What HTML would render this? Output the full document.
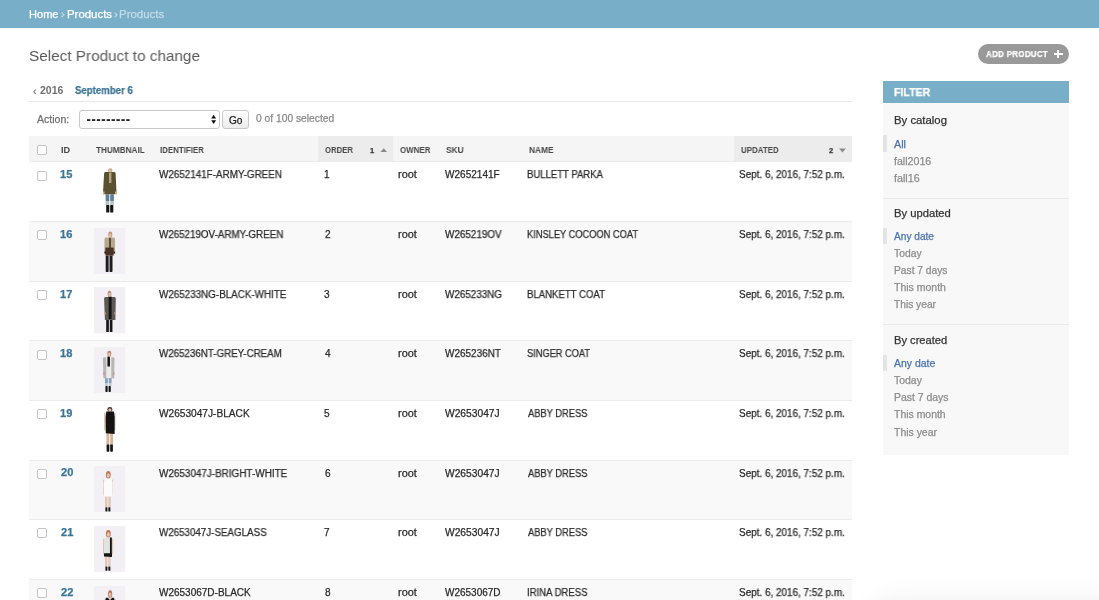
<!DOCTYPE html>
<html><head><meta charset="utf-8"><title>Select Product to change</title>
<style>
html,body{margin:0;padding:0;}
body{width:1099px;height:600px;overflow:hidden;position:relative;background:#fff;font-family:"Liberation Sans", sans-serif;}
.t{position:absolute;white-space:nowrap;transform-origin:0 0;will-change:transform;-webkit-text-stroke:0.25px currentColor;}
.a{position:absolute;}
</style></head><body>
<div class="a" style="left:0;top:0;width:1099px;height:28px;background:#79aec8;"></div>
<div class="a" style="left:977.5px;top:44.2px;width:91px;height:19.6px;border-radius:10px;background:#999;"></div>
<div class="a" style="left:1054px;top:53.1px;width:8.5px;height:2.4px;background:#fff;"></div>
<div class="a" style="left:1057.05px;top:50.1px;width:2.4px;height:8.4px;background:#fff;"></div>
<div class="a" style="left:29.4px;top:100.5px;width:822.4px;height:1.5px;background:#e6e6e6;"></div>
<div class="a" style="left:79.3px;top:110.2px;width:138.6px;height:17.3px;border:1px solid #c9c9c9;border-radius:3px;background:#fff;"></div>
<div class="a" style="left:86.7px;top:118.9px;width:50px;height:4px;"><svg width="50" height="4" style="display:block"><rect x="0.00" y="0.2" width="3.35" height="1.75" fill="#1a1a1a"/><rect x="4.91" y="0.2" width="3.35" height="1.75" fill="#1a1a1a"/><rect x="9.82" y="0.2" width="3.35" height="1.75" fill="#1a1a1a"/><rect x="14.73" y="0.2" width="3.35" height="1.75" fill="#1a1a1a"/><rect x="19.64" y="0.2" width="3.35" height="1.75" fill="#1a1a1a"/><rect x="24.55" y="0.2" width="3.35" height="1.75" fill="#1a1a1a"/><rect x="29.46" y="0.2" width="3.35" height="1.75" fill="#1a1a1a"/><rect x="34.37" y="0.2" width="3.35" height="1.75" fill="#1a1a1a"/><rect x="39.28" y="0.2" width="3.35" height="1.75" fill="#1a1a1a"/></svg></div>
<div class="a" style="left:210px;top:113px;width:8px;height:13px;"><svg width="8" height="13" style="display:block"><polygon points="1.2,5.4 6.1,5.4 3.65,1.8" fill="#111"/><polygon points="1.2,7.3 6.1,7.3 3.65,11.1" fill="#111"/></svg></div>
<div class="a" style="left:222.4px;top:110.2px;width:25px;height:16.5px;border:1px solid #c8c8c8;border-radius:3px;background:linear-gradient(#fefefe,#ececec);"></div>
<div class="a" style="left:29.4px;top:136.2px;width:822.4px;height:25.4px;background:#f5f5f5;"></div>
<div class="a" style="left:318.2px;top:136.2px;width:74.5px;height:25.4px;background:#ececec;"></div>
<div class="a" style="left:734px;top:136.2px;width:117.8px;height:25.4px;background:#ececec;"></div>
<div class="a" style="left:378px;top:146px;width:12px;height:8px;"><svg width="12" height="8" style="display:block"><polygon points="2.4,6 9.1,6 5.75,2.2" fill="#8a8a8a"/></svg></div>
<div class="a" style="left:837px;top:146px;width:12px;height:8px;"><svg width="12" height="8" style="display:block"><polygon points="2,2.6 8.9,2.6 5.45,6.4" fill="#8a8a8a"/></svg></div>
<div class="a" style="left:37px;top:144.6px;width:8px;height:8px;border:1px solid #c4c4c4;border-radius:2px;background:#fff;"></div>
<div class="a" style="left:29.4px;top:161.75px;width:822.4px;height:59.65px;background:#fff;"></div>
<div class="a" style="left:29.4px;top:161.25px;width:822.4px;height:1px;background:#ececec;"></div>
<div class="a" style="left:37px;top:170.55px;width:8px;height:8px;border:1px solid #c4c4c4;border-radius:2px;background:#fff;"></div>
<div class="a" style="left:94.3px;top:167.95px;width:31.3px;height:46.3px;"><svg width="31.3" height="46.3" viewBox="0 0 31.3 46.3" style="display:block"><rect x="0" y="0" width="31.3" height="46.3" fill="#ffffff"/><g style="filter:blur(0.25px)"><rect x="11.6" y="26.2" width="3.70" height="6.80" rx="0.6" fill="#5f7f9c"/><rect x="16.20" y="26.2" width="3.70" height="6.80" rx="0.6" fill="#5f7f9c"/><rect x="11.6" y="32.9" width="3.70" height="4.30" rx="0.6" fill="#b9c2c4"/><rect x="16.20" y="32.9" width="3.70" height="4.30" rx="0.6" fill="#b9c2c4"/><rect x="12.2" y="37.0" width="3.10" height="7.60" rx="0.6" fill="#141414"/><rect x="16.20" y="37.0" width="3.10" height="7.60" rx="0.6" fill="#141414"/><path d="M11.299999999999999 4.1 L20.400000000000002 4.1 Q21.6 4.1 21.6 5.6 L22.6 26.3 L8.9 26.3 L10.1 5.6 Q10.1 4.1 11.299999999999999 4.1 Z" fill="#59512f"/><rect x="15.0" y="5" width="2.4" height="10" fill="#b9a283"/><rect x="8.9" y="23.5" width="1.6" height="2.6" fill="#d8b090"/><rect x="21" y="23.5" width="1.6" height="2.6" fill="#d8b090"/><ellipse cx="16.20" cy="2.40" rx="2.21" ry="2.20" fill="#c9a27a"/><ellipse cx="16.20" cy="2.84" rx="1.33" ry="1.32" fill="#e6c4b0"/></g></svg></div>
<div class="a" style="left:29.4px;top:221.40px;width:822.4px;height:59.65px;background:#f9f9f9;"></div>
<div class="a" style="left:29.4px;top:220.90px;width:822.4px;height:1px;background:#ececec;"></div>
<div class="a" style="left:37px;top:230.2px;width:8px;height:8px;border:1px solid #c4c4c4;border-radius:2px;background:#fff;"></div>
<div class="a" style="left:94.3px;top:227.60px;width:31.3px;height:46.3px;"><svg width="31.3" height="46.3" viewBox="0 0 31.3 46.3" style="display:block"><rect x="0" y="0" width="31.3" height="46.3" fill="#f2f0f4"/><g style="filter:blur(0.25px)"><rect x="11.7" y="27.4" width="2.95" height="16.50" rx="0.6" fill="#1c1c1c"/><rect x="15.55" y="27.4" width="2.95" height="16.50" rx="0.6" fill="#1c1c1c"/><path d="M11.7 9.6 L19.8 9.6 Q21.0 9.6 21.0 11.1 L21.1 24.6 L10.4 24.6 L10.5 11.1 Q10.5 9.6 11.7 9.6 Z" fill="#b3ab8c"/><rect x="11.4" y="19.6" width="8.3" height="8.0" fill="#4a3223"/><rect x="15.2" y="10" width="1.6" height="10" fill="#4a3223"/><rect x="10.4" y="23.6" width="1.6" height="2" fill="#1a1a1a"/><rect x="19.5" y="23.6" width="1.6" height="2" fill="#1a1a1a"/><ellipse cx="16.25" cy="6.75" rx="2.00" ry="3.15" fill="#c79272"/><ellipse cx="16.25" cy="7.38" rx="1.20" ry="1.89" fill="#e6c4b0"/></g></svg></div>
<div class="a" style="left:29.4px;top:281.05px;width:822.4px;height:59.65px;background:#fff;"></div>
<div class="a" style="left:29.4px;top:280.55px;width:822.4px;height:1px;background:#ececec;"></div>
<div class="a" style="left:37px;top:289.85px;width:8px;height:8px;border:1px solid #c4c4c4;border-radius:2px;background:#fff;"></div>
<div class="a" style="left:94.3px;top:287.25px;width:31.3px;height:46.3px;"><svg width="31.3" height="46.3" viewBox="0 0 31.3 46.3" style="display:block"><rect x="0" y="0" width="31.3" height="46.3" fill="#f2f0f4"/><g style="filter:blur(0.25px)"><rect x="12.2" y="31.5" width="2.67" height="13.50" rx="0.6" fill="#161616"/><rect x="15.78" y="31.5" width="2.67" height="13.50" rx="0.6" fill="#161616"/><path d="M11.299999999999999 10.0 L20.6 10.0 Q21.8 10.0 21.8 11.5 L21.4 32.9 L10.9 32.9 L10.1 11.5 Q10.1 10.0 11.299999999999999 10.0 Z" fill="#5d5954"/><rect x="14.7" y="9.6" width="2.9" height="22.4" fill="#141414"/><rect x="10.3" y="25.3" width="1.5" height="2" fill="#d0a090"/><rect x="20.3" y="25.3" width="1.5" height="2" fill="#d0a090"/><ellipse cx="15.50" cy="6.90" rx="1.79" ry="3.20" fill="#b8896a"/><ellipse cx="15.50" cy="7.54" rx="1.07" ry="1.92" fill="#e6c4b0"/></g></svg></div>
<div class="a" style="left:29.4px;top:340.70px;width:822.4px;height:59.65px;background:#f9f9f9;"></div>
<div class="a" style="left:29.4px;top:340.20px;width:822.4px;height:1px;background:#ececec;"></div>
<div class="a" style="left:37px;top:349.5px;width:8px;height:8px;border:1px solid #c4c4c4;border-radius:2px;background:#fff;"></div>
<div class="a" style="left:94.3px;top:346.90px;width:31.3px;height:46.3px;"><svg width="31.3" height="46.3" viewBox="0 0 31.3 46.3" style="display:block"><rect x="0" y="0" width="31.3" height="46.3" fill="#f2f0f4"/><g style="filter:blur(0.25px)"><rect x="11.0" y="31.0" width="2.85" height="5.60" rx="0.6" fill="#86a3be"/><rect x="14.75" y="31.0" width="2.85" height="5.60" rx="0.6" fill="#86a3be"/><rect x="11.0" y="36.5" width="2.85" height="2.80" rx="0.6" fill="#c4ccd2"/><rect x="14.75" y="36.5" width="2.85" height="2.80" rx="0.6" fill="#c4ccd2"/><rect x="11.4" y="39.1" width="2.25" height="5.80" rx="0.6" fill="#151515"/><rect x="14.55" y="39.1" width="2.25" height="5.80" rx="0.6" fill="#151515"/><path d="M10.1 10.3 L19.3 10.3 Q20.5 10.3 20.5 11.8 L20.2 31.2 L9.4 31.2 L8.9 11.8 Q8.9 10.3 10.1 10.3 Z" fill="#b6b6b4"/><rect x="12.3" y="10" width="5" height="21" fill="#ecebea"/><rect x="13.45" y="9.5" width="2.5" height="10" fill="#141414"/><rect x="9.2" y="25.5" width="1.5" height="2" fill="#d09080"/><rect x="19" y="25.5" width="1.5" height="2" fill="#d09080"/><ellipse cx="15.30" cy="6.80" rx="1.96" ry="3.10" fill="#c08062"/><ellipse cx="15.30" cy="7.42" rx="1.17" ry="1.86" fill="#e6c4b0"/></g></svg></div>
<div class="a" style="left:29.4px;top:400.35px;width:822.4px;height:59.65px;background:#fff;"></div>
<div class="a" style="left:29.4px;top:399.85px;width:822.4px;height:1px;background:#ececec;"></div>
<div class="a" style="left:37px;top:409.15px;width:8px;height:8px;border:1px solid #c4c4c4;border-radius:2px;background:#fff;"></div>
<div class="a" style="left:94.3px;top:406.55px;width:31.3px;height:46.3px;"><svg width="31.3" height="46.3" viewBox="0 0 31.3 46.3" style="display:block"><rect x="0" y="0" width="31.3" height="46.3" fill="#ffffff"/><g style="filter:blur(0.25px)"><rect x="10.1" y="5.5" width="1.5" height="18.0" rx="0.7" fill="#dcc0aa"/><rect x="19.9" y="5.5" width="1.5" height="18.0" rx="0.7" fill="#dcc0aa"/><rect x="12.4" y="26.0" width="2.90" height="12.00" rx="0.6" fill="#d8b498"/><rect x="16.20" y="26.0" width="2.90" height="12.00" rx="0.6" fill="#d8b498"/><rect x="12.6" y="37.6" width="2.70" height="7.10" rx="0.6" fill="#141414"/><rect x="16.20" y="37.6" width="2.70" height="7.10" rx="0.6" fill="#141414"/><path d="M12.3 4.6 L19.9 4.6 L20.6 10 L20.6 27 L11.8 26.2 L11.6 10 Z" fill="#131313"/><ellipse cx="15.90" cy="2.45" rx="2.55" ry="2.35" fill="#4a3026"/><ellipse cx="15.90" cy="2.92" rx="1.53" ry="1.41" fill="#e6c4b0"/></g></svg></div>
<div class="a" style="left:29.4px;top:460.00px;width:822.4px;height:59.65px;background:#f9f9f9;"></div>
<div class="a" style="left:29.4px;top:459.50px;width:822.4px;height:1px;background:#ececec;"></div>
<div class="a" style="left:37px;top:468.8px;width:8px;height:8px;border:1px solid #c4c4c4;border-radius:2px;background:#fff;"></div>
<div class="a" style="left:94.3px;top:466.20px;width:31.3px;height:46.3px;"><svg width="31.3" height="46.3" viewBox="0 0 31.3 46.3" style="display:block"><rect x="0" y="0" width="31.3" height="46.3" fill="#f2f0f4"/><g style="filter:blur(0.25px)"><rect x="9.2" y="13.5" width="1.5" height="16.0" rx="0.7" fill="#e2c2b2"/><rect x="17.5" y="13.5" width="1.5" height="16.0" rx="0.7" fill="#e2c2b2"/><rect x="11.0" y="30.0" width="2.45" height="11.40" rx="0.6" fill="#e4c6b6"/><rect x="14.35" y="30.0" width="2.45" height="11.40" rx="0.6" fill="#e4c6b6"/><rect x="11.4" y="41.2" width="2.05" height="4.30" rx="0.6" fill="#1b1b1b"/><rect x="14.35" y="41.2" width="2.05" height="4.30" rx="0.6" fill="#1b1b1b"/><path d="M11 12.5 L17.4 12.5 L18.6 16 L18.6 30.6 L9.8 30.6 L9.8 16 Z" fill="#fbfbfb"/><ellipse cx="14.30" cy="8.75" rx="2.38" ry="3.85" fill="#bb7452"/><ellipse cx="14.30" cy="9.52" rx="1.43" ry="2.31" fill="#e6c4b0"/></g></svg></div>
<div class="a" style="left:29.4px;top:519.65px;width:822.4px;height:59.65px;background:#fff;"></div>
<div class="a" style="left:29.4px;top:519.15px;width:822.4px;height:1px;background:#ececec;"></div>
<div class="a" style="left:37px;top:528.45px;width:8px;height:8px;border:1px solid #c4c4c4;border-radius:2px;background:#fff;"></div>
<div class="a" style="left:94.3px;top:525.85px;width:31.3px;height:46.3px;"><svg width="31.3" height="46.3" viewBox="0 0 31.3 46.3" style="display:block"><rect x="0" y="0" width="31.3" height="46.3" fill="#f2f0f4"/><g style="filter:blur(0.25px)"><rect x="9.0" y="12.5" width="1.5" height="16.0" rx="0.7" fill="#e2c2b2"/><rect x="17.7" y="12.5" width="1.5" height="16.0" rx="0.7" fill="#e2c2b2"/><rect x="11.0" y="30.8" width="2.35" height="9.90" rx="0.6" fill="#e4c6b6"/><rect x="14.25" y="30.8" width="2.35" height="9.90" rx="0.6" fill="#e4c6b6"/><rect x="11.4" y="40.5" width="2.05" height="4.30" rx="0.6" fill="#1b1b1b"/><rect x="14.35" y="40.5" width="2.05" height="4.30" rx="0.6" fill="#1b1b1b"/><path d="M10.6 11.5 L17.6 11.5 L17.8 31 L10.0 30.6 L10.0 27 L10.2 15 Z" fill="#e2e2e2"/><rect x="15.95" y="11.5" width="1.9" height="19.5" fill="#151515"/><path d="M10.0 27.3 L17.8 27.3 L17.8 31 L10.0 30.4 Z" fill="#151515"/><ellipse cx="14.35" cy="7.75" rx="2.42" ry="3.75" fill="#bb7452"/><ellipse cx="14.35" cy="8.50" rx="1.45" ry="2.25" fill="#e6c4b0"/></g></svg></div>
<div class="a" style="left:29.4px;top:579.30px;width:822.4px;height:59.65px;background:#f9f9f9;"></div>
<div class="a" style="left:29.4px;top:578.80px;width:822.4px;height:1px;background:#ececec;"></div>
<div class="a" style="left:37px;top:588.1px;width:8px;height:8px;border:1px solid #c4c4c4;border-radius:2px;background:#fff;"></div>
<div class="a" style="left:94.3px;top:585.50px;width:31.3px;height:46.3px;"><svg width="31.3" height="46.3" viewBox="0 0 31.3 46.3" style="display:block"><rect x="0" y="0" width="31.3" height="46.3" fill="#f2f0f4"/><g style="filter:blur(0.25px)"><rect x="10.6" y="12.5" width="1.6" height="16.0" rx="0.7" fill="#e2c2b2"/><rect x="20.0" y="12.5" width="1.6" height="16.0" rx="0.7" fill="#e2c2b2"/><path d="M12.0 11.8 L19.9 11.8 L21 16 L21 34 L11 34 L11 16 Z" fill="#151515"/><path d="M13.6 11.6 L18.4 11.6 L16 14.2 Z" fill="#eadbd4"/><ellipse cx="16.15" cy="7.95" rx="2.08" ry="3.65" fill="#bb7452"/><ellipse cx="16.15" cy="8.68" rx="1.25" ry="2.19" fill="#e6c4b0"/></g></svg></div>
<div class="a" style="left:883px;top:80.5px;width:186px;height:374px;background:#f8f8f8;"></div>
<div class="a" style="left:883px;top:80.5px;width:186px;height:22.3px;background:#79aec8;"></div>
<div class="a" style="left:883px;top:197.5px;width:186px;height:1px;background:#eaeaea;"></div>
<div class="a" style="left:883px;top:324px;width:186px;height:1px;background:#eaeaea;"></div>
<div class="a" style="left:883px;top:135px;width:3.6px;height:16.6px;background:#e4e4e4;"></div>
<div class="a" style="left:883px;top:227.6px;width:3.6px;height:16.4px;background:#e4e4e4;"></div>
<div class="a" style="left:883px;top:354.5px;width:3.6px;height:16.3px;background:#e4e4e4;"></div>
<div class="a" style="left:876px;top:603px;width:300px;height:100px;border-radius:16px;box-shadow:0 0 24px 6px rgba(0,0,0,0.055);background:#fff;"></div>
<div class="t" style="left:28.70px;top:8.95px;font-size:11.0px;line-height:11.0px;color:#fff;font-weight:400;transform:scaleX(1.0062);">Home</div>
<div class="t" style="left:60.87px;top:8.95px;font-size:11.0px;line-height:11.0px;color:#c4dce8;font-weight:400;transform:scaleX(1.0288);">›</div>
<div class="t" style="left:66.67px;top:8.95px;font-size:11.0px;line-height:11.0px;color:#fff;font-weight:400;transform:scaleX(1.0377);">Products</div>
<div class="t" style="left:113.57px;top:8.95px;font-size:11.0px;line-height:11.0px;color:#c4dce8;font-weight:400;transform:scaleX(1.0288);">›</div>
<div class="t" style="left:118.96px;top:8.95px;font-size:11.0px;line-height:11.0px;color:#c4dce8;font-weight:400;transform:scaleX(1.0425);">Products</div>
<div class="t" style="left:28.52px;top:47.76px;font-size:15.4px;line-height:15.4px;color:#5a5a5a;font-weight:400;transform:scaleX(0.9944);-webkit-text-stroke:0;">Select Product to change</div>
<div class="t" style="left:33.32px;top:85.67px;font-size:10.5px;line-height:10.5px;color:#777;font-weight:400;">‹</div>
<div class="t" style="left:39.60px;top:85.46px;font-size:10.5px;line-height:10.5px;color:#707070;font-weight:700;transform:scaleX(0.9835);-webkit-text-stroke:0;">2016</div>
<div class="t" style="left:74.54px;top:85.46px;font-size:10.5px;line-height:10.5px;color:#3a7396;font-weight:700;transform:scaleX(0.9162);">September 6</div>
<div class="t" style="left:36.83px;top:115.32px;font-size:10.0px;line-height:10.0px;color:#707070;font-weight:400;transform:scaleX(1.0560);">Action:</div>
<div class="t" style="left:229.32px;top:115.62px;font-size:10.0px;line-height:10.0px;color:#222;font-weight:400;transform:scaleX(1.0074);">Go</div>
<div class="t" style="left:256.48px;top:114.42px;font-size:10.0px;line-height:10.0px;color:#8a8a8a;font-weight:400;transform:scaleX(1.0272);">0 of 100 selected</div>
<div class="t" style="left:61.06px;top:145.96px;font-size:9.0px;line-height:9.0px;color:#484848;font-weight:700;transform:scaleX(1.0120);-webkit-text-stroke:0;">ID</div>
<div class="t" style="left:95.82px;top:145.96px;font-size:9.0px;line-height:9.0px;color:#484848;font-weight:700;transform:scaleX(0.9111);-webkit-text-stroke:0;">THUMBNAIL</div>
<div class="t" style="left:160.15px;top:145.96px;font-size:9.0px;line-height:9.0px;color:#484848;font-weight:700;transform:scaleX(0.8775);-webkit-text-stroke:0;">IDENTIFIER</div>
<div class="t" style="left:325.07px;top:145.96px;font-size:9.0px;line-height:9.0px;color:#484848;font-weight:700;transform:scaleX(0.8601);-webkit-text-stroke:0;">ORDER</div>
<div class="t" style="left:400.06px;top:145.96px;font-size:9.0px;line-height:9.0px;color:#484848;font-weight:700;transform:scaleX(0.8834);-webkit-text-stroke:0;">OWNER</div>
<div class="t" style="left:445.64px;top:145.96px;font-size:9.0px;line-height:9.0px;color:#484848;font-weight:700;transform:scaleX(0.9259);-webkit-text-stroke:0;">SKU</div>
<div class="t" style="left:528.91px;top:145.96px;font-size:9.0px;line-height:9.0px;color:#484848;font-weight:700;transform:scaleX(0.9271);-webkit-text-stroke:0;">NAME</div>
<div class="t" style="left:741.19px;top:145.96px;font-size:9.0px;line-height:9.0px;color:#484848;font-weight:700;transform:scaleX(0.8818);-webkit-text-stroke:0;">UPDATED</div>
<div class="t" style="left:369.80px;top:147.11px;font-size:7.8px;line-height:7.8px;color:#333;font-weight:700;transform:scaleX(0.9500);">1</div>
<div class="t" style="left:828.56px;top:147.11px;font-size:7.8px;line-height:7.8px;color:#333;font-weight:700;transform:scaleX(0.9500);">2</div>
<div class="t" style="left:59.98px;top:170.24px;font-size:10.0px;line-height:10.0px;color:#3b7698;font-weight:700;transform:scaleX(1.1074);">15</div>
<div class="t" style="left:158.67px;top:170.47px;font-size:10.0px;line-height:10.0px;color:#2b2b2b;font-weight:400;transform:scaleX(0.9861);">W2652141F-ARMY-GREEN</div>
<div class="t" style="left:323.83px;top:170.47px;font-size:10.0px;line-height:10.0px;color:#2b2b2b;font-weight:400;transform:scaleX(1.0059);">1</div>
<div class="t" style="left:398.44px;top:170.47px;font-size:10.0px;line-height:10.0px;color:#2b2b2b;font-weight:400;transform:scaleX(1.0900);">root</div>
<div class="t" style="left:444.87px;top:170.47px;font-size:10.0px;line-height:10.0px;color:#2b2b2b;font-weight:400;transform:scaleX(1.0036);">W2652141F</div>
<div class="t" style="left:526.99px;top:170.47px;font-size:10.0px;line-height:10.0px;color:#2b2b2b;font-weight:400;transform:scaleX(0.9532);">BULLETT PARKA</div>
<div class="t" style="left:739.36px;top:170.47px;font-size:10.0px;line-height:10.0px;color:#2b2b2b;font-weight:400;transform:scaleX(0.9917);">Sept. 6, 2016, 7:52 p.m.</div>
<div class="t" style="left:59.98px;top:229.89px;font-size:10.0px;line-height:10.0px;color:#3b7698;font-weight:700;transform:scaleX(1.1074);">16</div>
<div class="t" style="left:158.67px;top:230.12px;font-size:10.0px;line-height:10.0px;color:#2b2b2b;font-weight:400;transform:scaleX(0.9796);">W265219OV-ARMY-GREEN</div>
<div class="t" style="left:324.52px;top:230.12px;font-size:10.0px;line-height:10.0px;color:#2b2b2b;font-weight:400;transform:scaleX(1.0059);">2</div>
<div class="t" style="left:398.44px;top:230.12px;font-size:10.0px;line-height:10.0px;color:#2b2b2b;font-weight:400;transform:scaleX(1.0900);">root</div>
<div class="t" style="left:444.87px;top:230.12px;font-size:10.0px;line-height:10.0px;color:#2b2b2b;font-weight:400;transform:scaleX(0.9898);">W265219OV</div>
<div class="t" style="left:526.98px;top:230.12px;font-size:10.0px;line-height:10.0px;color:#2b2b2b;font-weight:400;transform:scaleX(0.9288);">KINSLEY COCOON COAT</div>
<div class="t" style="left:739.36px;top:230.12px;font-size:10.0px;line-height:10.0px;color:#2b2b2b;font-weight:400;transform:scaleX(0.9917);">Sept. 6, 2016, 7:52 p.m.</div>
<div class="t" style="left:59.98px;top:289.54px;font-size:10.0px;line-height:10.0px;color:#3b7698;font-weight:700;transform:scaleX(1.1074);">17</div>
<div class="t" style="left:158.67px;top:289.77px;font-size:10.0px;line-height:10.0px;color:#2b2b2b;font-weight:400;transform:scaleX(0.9839);">W265233NG-BLACK-WHITE</div>
<div class="t" style="left:324.48px;top:289.77px;font-size:10.0px;line-height:10.0px;color:#2b2b2b;font-weight:400;transform:scaleX(1.0059);">3</div>
<div class="t" style="left:398.44px;top:289.77px;font-size:10.0px;line-height:10.0px;color:#2b2b2b;font-weight:400;transform:scaleX(1.0900);">root</div>
<div class="t" style="left:444.87px;top:289.77px;font-size:10.0px;line-height:10.0px;color:#2b2b2b;font-weight:400;transform:scaleX(0.9859);">W265233NG</div>
<div class="t" style="left:526.99px;top:289.77px;font-size:10.0px;line-height:10.0px;color:#2b2b2b;font-weight:400;transform:scaleX(0.9589);">BLANKETT COAT</div>
<div class="t" style="left:739.36px;top:289.77px;font-size:10.0px;line-height:10.0px;color:#2b2b2b;font-weight:400;transform:scaleX(0.9917);">Sept. 6, 2016, 7:52 p.m.</div>
<div class="t" style="left:59.98px;top:349.19px;font-size:10.0px;line-height:10.0px;color:#3b7698;font-weight:700;transform:scaleX(1.1074);">18</div>
<div class="t" style="left:158.67px;top:349.42px;font-size:10.0px;line-height:10.0px;color:#2b2b2b;font-weight:400;transform:scaleX(0.9763);">W265236NT-GREY-CREAM</div>
<div class="t" style="left:324.78px;top:349.42px;font-size:10.0px;line-height:10.0px;color:#2b2b2b;font-weight:400;transform:scaleX(1.0059);">4</div>
<div class="t" style="left:398.44px;top:349.42px;font-size:10.0px;line-height:10.0px;color:#2b2b2b;font-weight:400;transform:scaleX(1.0900);">root</div>
<div class="t" style="left:444.87px;top:349.42px;font-size:10.0px;line-height:10.0px;color:#2b2b2b;font-weight:400;transform:scaleX(0.9963);">W265236NT</div>
<div class="t" style="left:526.84px;top:349.42px;font-size:10.0px;line-height:10.0px;color:#2b2b2b;font-weight:400;transform:scaleX(0.9264);">SINGER COAT</div>
<div class="t" style="left:739.36px;top:349.42px;font-size:10.0px;line-height:10.0px;color:#2b2b2b;font-weight:400;transform:scaleX(0.9917);">Sept. 6, 2016, 7:52 p.m.</div>
<div class="t" style="left:59.98px;top:408.84px;font-size:10.0px;line-height:10.0px;color:#3b7698;font-weight:700;transform:scaleX(1.1074);">19</div>
<div class="t" style="left:158.66px;top:409.07px;font-size:10.0px;line-height:10.0px;color:#2b2b2b;font-weight:400;transform:scaleX(1.0132);">W2653047J-BLACK</div>
<div class="t" style="left:324.46px;top:409.07px;font-size:10.0px;line-height:10.0px;color:#2b2b2b;font-weight:400;transform:scaleX(1.0059);">5</div>
<div class="t" style="left:398.44px;top:409.07px;font-size:10.0px;line-height:10.0px;color:#2b2b2b;font-weight:400;transform:scaleX(1.0900);">root</div>
<div class="t" style="left:444.86px;top:409.07px;font-size:10.0px;line-height:10.0px;color:#2b2b2b;font-weight:400;transform:scaleX(1.0240);">W2653047J</div>
<div class="t" style="left:527.67px;top:409.07px;font-size:10.0px;line-height:10.0px;color:#2b2b2b;font-weight:400;transform:scaleX(0.9323);">ABBY DRESS</div>
<div class="t" style="left:739.36px;top:409.07px;font-size:10.0px;line-height:10.0px;color:#2b2b2b;font-weight:400;transform:scaleX(0.9917);">Sept. 6, 2016, 7:52 p.m.</div>
<div class="t" style="left:60.67px;top:468.49px;font-size:10.0px;line-height:10.0px;color:#3b7698;font-weight:700;transform:scaleX(1.1074);">20</div>
<div class="t" style="left:158.67px;top:468.72px;font-size:10.0px;line-height:10.0px;color:#2b2b2b;font-weight:400;transform:scaleX(0.9901);">W2653047J-BRIGHT-WHITE</div>
<div class="t" style="left:324.52px;top:468.72px;font-size:10.0px;line-height:10.0px;color:#2b2b2b;font-weight:400;transform:scaleX(1.0059);">6</div>
<div class="t" style="left:398.44px;top:468.72px;font-size:10.0px;line-height:10.0px;color:#2b2b2b;font-weight:400;transform:scaleX(1.0900);">root</div>
<div class="t" style="left:444.86px;top:468.72px;font-size:10.0px;line-height:10.0px;color:#2b2b2b;font-weight:400;transform:scaleX(1.0240);">W2653047J</div>
<div class="t" style="left:527.67px;top:468.72px;font-size:10.0px;line-height:10.0px;color:#2b2b2b;font-weight:400;transform:scaleX(0.9323);">ABBY DRESS</div>
<div class="t" style="left:739.36px;top:468.72px;font-size:10.0px;line-height:10.0px;color:#2b2b2b;font-weight:400;transform:scaleX(0.9917);">Sept. 6, 2016, 7:52 p.m.</div>
<div class="t" style="left:60.67px;top:528.14px;font-size:10.0px;line-height:10.0px;color:#3b7698;font-weight:700;transform:scaleX(1.1074);">21</div>
<div class="t" style="left:158.67px;top:528.37px;font-size:10.0px;line-height:10.0px;color:#2b2b2b;font-weight:400;transform:scaleX(0.9776);">W2653047J-SEAGLASS</div>
<div class="t" style="left:323.87px;top:528.37px;font-size:10.0px;line-height:10.0px;color:#2b2b2b;font-weight:400;transform:scaleX(1.0059);">7</div>
<div class="t" style="left:398.44px;top:528.37px;font-size:10.0px;line-height:10.0px;color:#2b2b2b;font-weight:400;transform:scaleX(1.0900);">root</div>
<div class="t" style="left:444.86px;top:528.37px;font-size:10.0px;line-height:10.0px;color:#2b2b2b;font-weight:400;transform:scaleX(1.0240);">W2653047J</div>
<div class="t" style="left:527.67px;top:528.37px;font-size:10.0px;line-height:10.0px;color:#2b2b2b;font-weight:400;transform:scaleX(0.9323);">ABBY DRESS</div>
<div class="t" style="left:739.36px;top:528.37px;font-size:10.0px;line-height:10.0px;color:#2b2b2b;font-weight:400;transform:scaleX(0.9917);">Sept. 6, 2016, 7:52 p.m.</div>
<div class="t" style="left:60.67px;top:587.79px;font-size:10.0px;line-height:10.0px;color:#3b7698;font-weight:700;transform:scaleX(1.1074);">22</div>
<div class="t" style="left:158.67px;top:588.02px;font-size:10.0px;line-height:10.0px;color:#2b2b2b;font-weight:400;">W2653067D-BLACK</div>
<div class="t" style="left:324.56px;top:588.02px;font-size:10.0px;line-height:10.0px;color:#2b2b2b;font-weight:400;transform:scaleX(1.0059);">8</div>
<div class="t" style="left:398.44px;top:588.02px;font-size:10.0px;line-height:10.0px;color:#2b2b2b;font-weight:400;transform:scaleX(1.0900);">root</div>
<div class="t" style="left:444.87px;top:588.02px;font-size:10.0px;line-height:10.0px;color:#2b2b2b;font-weight:400;">W2653067D</div>
<div class="t" style="left:526.77px;top:588.02px;font-size:10.0px;line-height:10.0px;color:#2b2b2b;font-weight:400;transform:scaleX(0.9551);">IRINA DRESS</div>
<div class="t" style="left:739.36px;top:588.02px;font-size:10.0px;line-height:10.0px;color:#2b2b2b;font-weight:400;transform:scaleX(0.9917);">Sept. 6, 2016, 7:52 p.m.</div>
<div class="t" style="left:893.50px;top:87.24px;font-size:10.8px;line-height:10.8px;color:#fff;font-weight:700;transform:scaleX(0.9762);">FILTER</div>
<div class="t" style="left:894.04px;top:114.78px;font-size:10.6px;line-height:10.6px;color:#333;font-weight:400;transform:scaleX(1.0709);">By catalog</div>
<div class="t" style="left:894.22px;top:139.92px;font-size:10.0px;line-height:10.0px;color:#4a72b0;font-weight:400;transform:scaleX(1.0755);">All</div>
<div class="t" style="left:894.20px;top:156.72px;font-size:10.0px;line-height:10.0px;color:#8c8c8c;font-weight:400;transform:scaleX(1.0634);">fall2016</div>
<div class="t" style="left:894.19px;top:173.72px;font-size:10.0px;line-height:10.0px;color:#8c8c8c;font-weight:400;transform:scaleX(1.0764);">fall16</div>
<div class="t" style="left:894.05px;top:207.68px;font-size:10.6px;line-height:10.6px;color:#333;font-weight:400;transform:scaleX(1.0591);">By updated</div>
<div class="t" style="left:894.45px;top:232.02px;font-size:10.0px;line-height:10.0px;color:#4a72b0;font-weight:400;transform:scaleX(1.0119);">Any date</div>
<div class="t" style="left:894.32px;top:249.07px;font-size:10.0px;line-height:10.0px;color:#8c8c8c;font-weight:400;transform:scaleX(1.0336);">Today</div>
<div class="t" style="left:893.72px;top:266.12px;font-size:10.0px;line-height:10.0px;color:#8c8c8c;font-weight:400;transform:scaleX(1.0233);">Past 7 days</div>
<div class="t" style="left:894.31px;top:283.17px;font-size:10.0px;line-height:10.0px;color:#8c8c8c;font-weight:400;transform:scaleX(1.0494);">This month</div>
<div class="t" style="left:894.33px;top:300.22px;font-size:10.0px;line-height:10.0px;color:#8c8c8c;font-weight:400;transform:scaleX(1.0202);">This year</div>
<div class="t" style="left:894.06px;top:335.03px;font-size:10.6px;line-height:10.6px;color:#333;font-weight:400;transform:scaleX(1.0515);">By created</div>
<div class="t" style="left:894.44px;top:359.32px;font-size:10.0px;line-height:10.0px;color:#4a72b0;font-weight:400;transform:scaleX(1.0442);">Any date</div>
<div class="t" style="left:894.32px;top:376.37px;font-size:10.0px;line-height:10.0px;color:#8c8c8c;font-weight:400;transform:scaleX(1.0442);">Today</div>
<div class="t" style="left:893.70px;top:393.42px;font-size:10.0px;line-height:10.0px;color:#8c8c8c;font-weight:400;transform:scaleX(1.0442);">Past 7 days</div>
<div class="t" style="left:894.32px;top:410.47px;font-size:10.0px;line-height:10.0px;color:#8c8c8c;font-weight:400;transform:scaleX(1.0442);">This month</div>
<div class="t" style="left:894.32px;top:427.52px;font-size:10.0px;line-height:10.0px;color:#8c8c8c;font-weight:400;transform:scaleX(1.0442);">This year</div>
<div class="t" style="left:986.39px;top:50.18px;font-size:8.8px;line-height:8.8px;color:#fff;font-weight:700;transform:scaleX(0.9085);letter-spacing:0.3px;">ADD PRODUCT</div>
</body></html>
